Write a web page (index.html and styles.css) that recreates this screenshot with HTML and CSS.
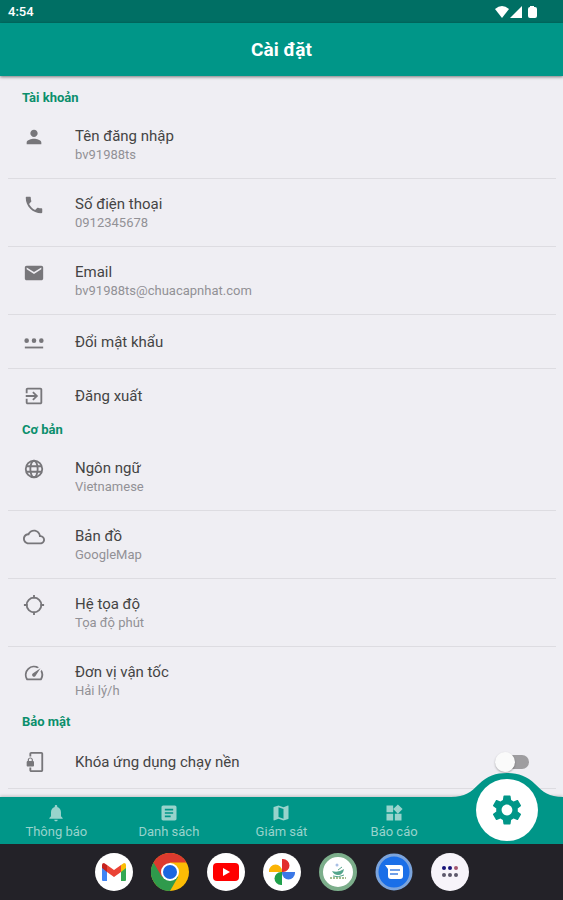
FILE: index.html
```
<!DOCTYPE html>
<html lang="vi">
<head>
  <meta charset="UTF-8" />
  <meta name="viewport" content="width=device-width, initial-scale=1.0" />
  <title>Cài đặt</title>
  <link rel="stylesheet" href="styles.css">
</head>
<body>

  <div class="status-bar">
    <span>4:54</span>
    <svg class="status-icons" viewBox="0 0 44 14" aria-hidden="true">
      <path d="M0 4Q7-2 14 4L7 13z" />
      <path d="M15 13L27 1v12z" />
      <path d="M35 1h4v1h1q2 0 2 2v7q0 2-2 2h-5q-2 0-2-2V4q0-2 2-2z" />
    </svg>
  </div>

  <header class="app-bar">
    <h1>Cài đặt</h1>
  </header>

  <main class="settings">
    <h2>Tài khoản</h2>
    <button class="row">
      <svg class="icon" viewBox="0 0 24 24"><path d="M12 12c2.21 0 4-1.79 4-4s-1.79-4-4-4-4 1.79-4 4 1.79 4 4 4zm0 2c-2.67 0-8 1.34-8 4v2h16v-2c0-2.66-5.33-4-8-4z" /></svg>
      <span class="text"><span class="name">Tên đăng nhập</span><span class="value">bv91988ts</span></span>
    </button>
    <button class="row">
      <svg class="icon" viewBox="0 0 24 24"><path d="M6.62 10.79c1.44 2.83 3.76 5.14 6.59 6.59l2.2-2.2c.27-.27.67-.36 1.02-.24 1.12.37 2.33.57 3.57.57.55 0 1 .45 1 1V20c0 .55-.45 1-1 1-9.39 0-17-7.61-17-17 0-.55.45-1 1-1h3.5c.55 0 1 .45 1 1 0 1.25.2 2.45.57 3.57.11.35.03.74-.25 1.02l-2.2 2.2z" /></svg>
      <span class="text"><span class="name">Số điện thoại</span><span class="value">0912345678</span></span>
    </button>
    <button class="row">
      <svg class="icon" viewBox="0 0 24 24"><path d="M20 4H4c-1.1 0-1.99.9-1.99 2L2 18c0 1.1.9 2 2 2h16c1.1 0 2-.9 2-2V6c0-1.1-.9-2-2-2zm0 4l-8 5-8-5V6l8 5 8-5v2z" /></svg>
      <span class="text"><span class="name">Email</span><span class="value">bv91988ts@chuacapnhat.com</span></span>
    </button>
    <button class="row single">
      <svg class="icon" viewBox="0 0 24 24"><path d="M2 17h20v2H2z" /><circle cx="4" cy="10.500" r="2.500" /><circle cx="12" cy="10.500" r="2.500" /><circle cx="20" cy="10.500" r="2.500" /></svg>
      <span class="name">Đổi mật khẩu</span>
    </button>
    <button class="row single last">
      <svg class="icon" viewBox="0 0 24 24"><path d="M10.090 15.590L11.500 17l5-5-5-5-1.410 1.410L12.670 11H3v2h9.670l-2.580 2.590zM19 3H5c-1.110 0-2 .9-2 2v4h2V5h14v14H5v-4H3v4c0 1.100.89 2 2 2h14c1.100 0 2-.9 2-2V5c0-1.100-.9-2-2-2z" /></svg>
      <span class="name">Đăng xuất</span>
    </button>

    <h2>Cơ bản</h2>
    <button class="row">
      <svg class="icon line" viewBox="0 0 24 24"><circle cx="12" cy="12" r="9" /><ellipse cx="12" cy="12" rx="4" ry="9" /><path d="M4 9h16M4 15h16" /></svg>
      <span class="text"><span class="name">Ngôn ngữ</span><span class="value">Vietnamese</span></span>
    </button>
    <button class="row">
      <svg class="icon" viewBox="0 0 24 24"><path d="M19.350 10.040C18.670 6.590 15.640 4 12 4 9.110 4 6.600 5.640 5.350 8.040 2.340 8.360 0 10.910 0 14c0 3.310 2.690 6 6 6h13c2.760 0 5-2.240 5-5 0-2.640-2.050-4.780-4.650-4.960zM19 18H6c-2.210 0-4-1.790-4-4s1.790-4 4-4h.71C7.370 7.690 9.480 6 12 6c3.040 0 5.500 2.460 5.500 5.500v.5H19c1.660 0 3 1.340 3 3s-1.340 3-3 3z" /></svg>
      <span class="text"><span class="name">Bản đồ</span><span class="value">GoogleMap</span></span>
    </button>
    <button class="row">
      <svg class="icon line" viewBox="0 0 24 24"><circle cx="12" cy="12" r="8" /><path d="M12 1v4M12 19v4M1 12h4M19 12h4" /></svg>
      <span class="text"><span class="name">Hệ tọa độ</span><span class="value">Tọa độ phút</span></span>
    </button>
    <button class="row last">
      <svg class="icon" viewBox="0 0 24 24"><path d="M20.380 8.570l-1.230 1.850a8 8 0 0 1-.22 7.580H5.070A8 8 0 0 1 15.580 6.850l1.850-1.230A10 10 0 0 0 3.350 19a2 2 0 0 0 1.720 1h13.850a2 2 0 0 0 1.740-1 10 10 0 0 0-.27-10.440zm-9.790 6.840a2 2 0 0 0 2.830 0l5.660-8.490-8.490 5.660a2 2 0 0 0 0 2.830z" /></svg>
      <span class="text"><span class="name">Đơn vị vận tốc</span><span class="value">Hải lý/h</span></span>
    </button>

    <h2>Bảo mật</h2>
    <label class="row single">
      <svg class="icon" viewBox="0 0 24 24"><path d="M20 1H9c-1.100 0-2 .9-2 2v3h2V3h11v18H9v-3H7v3c0 1.100.9 2 2 2h11c1.100 0 2-.9 2-2V3c0-1.100-.9-2-2-2zM10.800 11V9.500C10.800 8.100 9.400 7 8 7S5.200 8.100 5.200 9.500V11c-.6 0-1.200.6-1.200 1.200v3.500c0 .7.600 1.300 1.200 1.300h5.500c.7 0 1.300-.6 1.300-1.200v-3.500c0-.7-.6-1.300-1.200-1.300zm-1.300 0h-3V9.500c0-.8.700-1.300 1.500-1.300s1.500.5 1.500 1.300V11z" /></svg>
      <span class="name">Khóa ứng dụng chạy nền</span>
      <input class="switch" type="checkbox" role="switch">
    </label>
  </main>

  <nav class="tabs">
    <a href="#">
      <svg viewBox="0 0 24 24"><path d="M12 22c1.100 0 2-.9 2-2h-4c0 1.100.89 2 2 2zm6-6v-5c0-3.070-1.640-5.640-4.500-6.320V4c0-.83-.67-1.500-1.500-1.500s-1.500.67-1.500 1.500v.68C7.630 5.360 6 7.920 6 11v5l-2 2v1h16v-1l-2-2z" /></svg>
      Thông báo
    </a>
    <a href="#">
      <svg viewBox="0 0 24 24"><path d="M19 3H5c-1.100 0-2 .9-2 2v14c0 1.100.9 2 2 2h14c1.100 0 2-.9 2-2V5c0-1.100-.9-2-2-2zm-5 14H7v-2h7v2zm3-4H7v-2h10v2zm0-4H7V7h10v2z" /></svg>
      Danh sách
    </a>
    <a href="#">
      <svg viewBox="0 0 24 24"><path d="M20.500 3l-.16.03L15 5.100 9 3 3.360 4.900c-.21.07-.36.25-.36.48V20.500c0 .28.22.5.5.5l.16-.03L9 18.900l6 2.100 5.640-1.900c.21-.07.36-.25.36-.48V3.500c0-.28-.22-.5-.5-.5zM15 19l-6-2.110V5l6 2.110V19z" /></svg>
      Giám sát
    </a>
    <a href="#">
      <svg viewBox="0 0 24 24"><path d="M13 13v8h8v-8h-8zM3 21h8v-8H3v8zM3 3v8h8V3H3zm13.660-1.310L11 7.340 16.660 13l5.660-5.660-5.660-5.650z" /></svg>
      Báo cáo
    </a>
    <a class="active" href="#" aria-label="Cài đặt">
      <svg class="hump" viewBox="0 0 112 24"><path d="M0 24C14 24 20 19 28 11C36 3 45 0 56 0S76 3 84 11C92 19 98 24 112 24z" /></svg>
      <span class="circle">
        <svg viewBox="0 0 24 24"><path d="M19.140 12.940c.04-.3.060-.61.060-.94 0-.32-.02-.64-.07-.94l2.030-1.580c.18-.14.23-.41.12-.61l-1.920-3.320c-.12-.22-.37-.29-.59-.22l-2.390.96c-.5-.38-1.030-.7-1.620-.94l-.36-2.540c-.04-.24-.24-.41-.48-.41h-3.840c-.24 0-.43.17-.47.41l-.36 2.540c-.59.24-1.130.57-1.620.94l-2.390-.96c-.22-.08-.47 0-.59.22L2.740 8.870c-.12.21-.08.47.12.61l2.030 1.580c-.05.3-.09.63-.09.94s.02.64.07.94l-2.030 1.580c-.18.14-.23.41-.12.61l1.920 3.320c.12.22.37.29.59.22l2.390-.96c.5.38 1.030.7 1.620.94l.36 2.540c.05.24.24.41.48.41h3.840c.24 0 .44-.17.47-.41l.36-2.540c.59-.24 1.130-.56 1.620-.94l2.390.96c.22.08.47 0 .59-.22l1.920-3.320c.12-.22.070-.47-.12-.61l-2.010-1.580zM12 15.600c-1.980 0-3.600-1.620-3.600-3.600s1.620-3.600 3.600-3.600 3.600 1.620 3.600 3.600-1.620 3.600-3.600 3.600z" /></svg>
      </span>
    </a>
  </nav>

  <div class="dock">
    <button aria-label="Gmail">
      <svg viewBox="0 0 38 38">
        <circle cx="19" cy="19" r="19" fill="#fff" />
        <path fill="#4285f4" d="M7 13l5 4v11H8q-1 0-1-1z" />
        <path fill="#34a853" d="M31 13l-5 4v11h4q1 0 1-1z" />
        <path fill="#fbbc04" d="M26 12l3-2q2 0 2 2v3l-5 4z" />
        <path fill="#c5221f" d="M12 12l-3-2q-2 0-2 2v3l5 4z" />
        <path fill="#ea4335" d="M12 12l7 5 7-5v7l-7 5-7-5z" />
      </svg>
    </button>
    <button aria-label="Chrome">
      <svg viewBox="0 0 38 38">
        <circle cx="19" cy="19" r="19" fill="#fbbc05" />
        <path fill="#2f9a4c" d="M19 19L2.500 9.500A19 19 0 0 0 19 38l8-14z" />
        <path fill="#dc3a2e" d="M2.500 9.500A19 19 0 0 1 35.500 9.500H19L11 24z" />
        <circle cx="19" cy="19" r="9" fill="#fff" />
        <circle cx="19" cy="19" r="7" fill="#1a66e0" />
      </svg>
    </button>
    <button aria-label="YouTube">
      <svg viewBox="0 0 38 38">
        <circle cx="19" cy="19" r="19" fill="#fff" />
        <rect x="6" y="10" width="26" height="18" rx="4" fill="#f00" />
        <path fill="#fff" d="M16 15l7 4-7 4z" />
      </svg>
    </button>
    <button aria-label="Photos">
      <svg viewBox="0 0 38 38">
        <circle cx="19" cy="19" r="19" fill="#fff" />
        <path fill="#e22d2d" d="M19 6h1a6 6 0 0 1 0 13h-1z" />
        <path fill="#3b78e7" d="M32 19v1a6 6 0 0 1-13 0v-1z" />
        <path fill="#1fa04b" d="M19 32h-1a6 6 0 0 1 0-13h1z" />
        <path fill="#fbb404" d="M6 19v-1a6 6 0 0 1 13 0v1z" />
      </svg>
    </button>
    <button aria-label="Giám sát tàu">
      <svg viewBox="0 0 38 38">
        <circle cx="19" cy="19" r="17" fill="#fff" stroke="#7cae8b" stroke-width="4" />
        <path fill="#55a68c" d="M13 18q6 2 12-2-1 6-6 6-4 0-6-4z" />
        <path fill="none" stroke="#55a68c" d="M14 23q5 2 11-1M19 17l4-3" />
        <circle cx="18" cy="12" r="1.500" fill="#a9bfe5" />
        <path stroke="#a3bd8e" stroke-width="2" stroke-dasharray="2 1" d="M11 25h16" />
      </svg>
    </button>
    <button aria-label="Tin nhắn">
      <svg viewBox="0 0 38 38">
        <circle cx="19" cy="19" r="17" fill="#1a6fe8" stroke="#7ba4dc" stroke-width="3" />
        <path fill="#fff" d="M10 12h15q3 0 3 3v8q0 3-3 3H16q-3 0-3-3v-7z" />
        <path stroke="#6f9fe8" stroke-width="2" d="M15 17h10M15 21h8" />
      </svg>
    </button>
    <button aria-label="Tất cả ứng dụng">
      <svg viewBox="0 0 38 38">
        <circle cx="19" cy="19" r="19" fill="#f7f4fa" />
        <g fill="#17127a"><circle cx="13" cy="15" r="2" /><circle cx="19" cy="15" r="2" /></g>
        <circle cx="25" cy="15" r="2" fill="#a5566f" />
        <g fill="#5d586b"><circle cx="13" cy="22" r="2" /><circle cx="19" cy="22" r="2" /><circle cx="25" cy="22" r="2" /></g>
      </svg>
    </button>
  </div>

</body>
</html>
```

FILE: styles.css
```
* {
  box-sizing: border-box;
}

body {
  margin: 0;
  height: 100vh;
  display: flex;
  flex-direction: column;
  font-family: Roboto, sans-serif;
  background: #efeef3;
  color: #444;
}

button {
  font: inherit;
  color: inherit;
  background: none;
  border: 0;
  padding: 0;
  cursor: pointer;
}

svg {
  display: block;
  flex-shrink: 0;
}

.status-bar {
  display: flex;
  justify-content: space-between;
  align-items: center;
  height: 23px;
  padding: 0 24px 0 8px;
  background: #006f64;
  color: #fff;
  font-size: 13px;
  font-weight: 500;
}

.status-icons {
  width: 44px;
  height: 14px;
  fill: #fff;
}

.app-bar {
  display: flex;
  justify-content: center;
  align-items: center;
  height: 53px;
  background: #009688;
  color: #fff;
  box-shadow: 0 1px 3px rgba(0, 0, 0, 0.5);
}

.app-bar h1 {
  margin: 0;
  font-size: 19px;
  font-weight: 700;
}

.settings {
  flex: 1;
  min-height: 0;
  overflow: hidden;
  padding: 15px 7px 0 8px;
}

.settings h2 {
  margin: 0;
  height: 20px;
  padding-left: 14px;
  font-size: 13px;
  line-height: 14px;
  font-weight: 700;
  color: #0b8f6c;
}

.row {
  display: flex;
  align-items: flex-start;
  width: 100%;
  height: 68px;
  padding: 14px 27px 0 14px;
  gap: 29px;
  border-bottom: 1px solid #dddce1;
  text-align: left;
}

.row.single {
  align-items: center;
  height: 54px;
  padding-top: 0;
}

.row.last {
  border-bottom-color: transparent;
}

.icon {
  width: 24px;
  height: 24px;
  padding: 1px;
  fill: #77767a;
}

.icon.line {
  fill: none;
  stroke: #77767a;
  stroke-width: 2;
}

.text {
  display: flex;
  flex-direction: column;
  padding-top: 1px;
}

.name {
  font-size: 15px;
  line-height: 20px;
}

.value {
  font-size: 13px;
  line-height: 18px;
  color: #929196;
}

.switch {
  appearance: none;
  display: flex;
  align-items: center;
  width: 29px;
  height: 14px;
  margin: 0 0 0 auto;
  border-radius: 7px;
  background: #9e9da0;
}

.switch::before {
  content: "";
  flex-shrink: 0;
  width: 20px;
  height: 20px;
  margin-left: -5px;
  border-radius: 50%;
  background: #fafafa;
  box-shadow: 0 1px 2px rgba(0, 0, 0, 0.3);
}

.switch:checked::before {
  margin-left: 14px;
}

.tabs {
  display: grid;
  grid-template-columns: repeat(5, 1fr);
  height: 47px;
  background: #009688;
  box-shadow: 0 -1px 3px rgba(0, 0, 0, 0.2);
}

.tabs a {
  position: relative;
  display: flex;
  flex-direction: column;
  align-items: center;
  padding-top: 6px;
  color: #98d3cc;
  font-size: 13px;
  line-height: 18px;
  text-decoration: none;
}

.tabs svg {
  width: 22px;
  height: 20px;
  fill: #98d3cc;
}

.tabs .hump {
  position: absolute;
  bottom: 100%;
  width: 112px;
  height: 24px;
  fill: #009688;
}

.circle {
  position: absolute;
  top: -18px;
  display: flex;
  justify-content: center;
  align-items: center;
  width: 62px;
  height: 62px;
  border-radius: 50%;
  background: #fff;
}

.tabs .circle svg {
  width: 36px;
  height: 36px;
  fill: #009688;
}

.dock {
  display: flex;
  justify-content: center;
  align-items: center;
  gap: 18px;
  height: 56px;
  background: #232228;
}

.dock svg {
  width: 38px;
  height: 38px;
}
```
